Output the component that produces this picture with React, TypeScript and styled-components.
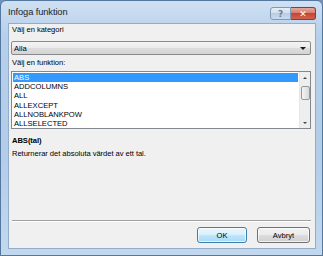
import React from 'react';
import styled, { createGlobalStyle } from 'styled-components';

const GlobalStyle = createGlobalStyle`
  html, body {
    margin: 0;
    padding: 0;
    background: #6f93bb;
  }
  * {
    box-sizing: border-box;
  }
`;

const Window = styled.div`
  width: 323px;
  height: 256px;
  display: flex;
  flex-direction: column;
  border: 1px solid #54779f;
  border-radius: 6px 6px 0 0;
  background: linear-gradient(180deg, #cfe0f3 0%, #b6cfea 14%, #b3cce8 60%, #c2d8ef 100%);
  padding: 0 6px 6px 7px;
  font-family: "Liberation Sans", Arial, sans-serif;
  color: #000;
`;

const TitleBar = styled.div`
  height: 22px;
  flex: none;
  display: flex;
  align-items: flex-start;
  justify-content: space-between;
`;

const Title = styled.div`
  font-size: 9.3px;
  line-height: 10px;
  margin-top: 6px;
  color: #1e1e1e;
  letter-spacing: -0.1px;
`;

const Caption = styled.div`
  display: flex;
  margin-top: 6px;
`;

const CaptionButton = styled.div<{ $close?: boolean }>`
  height: 13px;
  width: ${(p) => (p.$close ? '25px' : '21px')};
  display: flex;
  align-items: center;
  justify-content: center;
  border: 1px solid ${(p) => (p.$close ? '#8c3b32' : '#7e98b7')};
  border-radius: ${(p) => (p.$close ? '0 3px 3px 0' : '3px 0 0 3px')};
  border-left-width: ${(p) => (p.$close ? '0' : '1px')};
  background: ${(p) =>
    p.$close
      ? 'linear-gradient(180deg, #e8a89c 0%, #d47f70 45%, #c44735 50%, #d0634e 100%)'
      : 'linear-gradient(180deg, #e6eef8 0%, #d0deee 45%, #b9cde4 50%, #c8daee 100%)'};
  color: ${(p) => (p.$close ? '#fff' : '#6f7f94')};
  font-size: 9px;
  font-weight: bold;
  font-family: "DejaVu Sans", sans-serif;
`;

const Client = styled.div`
  flex: 1;
  display: flex;
  flex-direction: column;
  background: #f0f0f0;
  border: 1px solid #93acca;
  padding: 0 4px 5px 2px;
  font-size: 7.6px;
`;

const Label = styled.div<{ $top: number; $bold?: boolean }>`
  height: 10px;
  line-height: 10px;
  margin-top: ${(p) => p.$top}px;
  padding-left: 1px;
  font-weight: ${(p) => (p.$bold ? 'bold' : 'normal')};
  white-space: nowrap;
  letter-spacing: -0.05px;
`;

const Combo = styled.div`
  margin-top: 6px;
  height: 14px;
  display: flex;
  align-items: center;
  justify-content: space-between;
  padding: 0 4px 0 2px;
  border: 1px solid #8a8a8a;
  border-radius: 2px;
  background: linear-gradient(180deg, #f4f4f4 0%, #ebebeb 48%, #dddddd 52%, #d4d4d4 100%);
`;

const Arrow = styled.span`
  width: 0;
  height: 0;
  border-left: 3px solid transparent;
  border-right: 3px solid transparent;
  border-top: 3px solid #1a1a1a;
`;

const ListBox = styled.div`
  margin-top: 3px;
  height: 58px;
  display: flex;
  border: 1px solid #828790;
  background: #fff;
  overflow: hidden;
`;

const Items = styled.div`
  flex: 1;
  padding: 1px 1px 0 1px;
`;

const Item = styled.div<{ $selected?: boolean }>`
  height: 9.2px;
  line-height: 9.2px;
  padding-left: 1px;
  background: ${(p) => (p.$selected ? '#3399ff' : 'transparent')};
  color: ${(p) => (p.$selected ? '#fff' : '#000')};
`;

const ScrollBar = styled.div`
  width: 11px;
  display: flex;
  flex-direction: column;
  align-items: center;
  background: #eeeeee;
  border-left: 1px solid #e6e6e6;
`;

const ScrollArrow = styled.div<{ $up?: boolean }>`
  height: 11px;
  display: flex;
  align-items: center;
  justify-content: center;
  &::after {
    content: '';
    width: 0;
    height: 0;
    border-left: 2.5px solid transparent;
    border-right: 2.5px solid transparent;
    ${(p) => (p.$up ? 'border-bottom: 2.5px solid #444;' : 'border-top: 2.5px solid #444;')}
  }
`;

const Thumb = styled.div`
  width: 9px;
  height: 14px;
  margin-top: 3px;
  border: 1px solid #979797;
  border-radius: 2px;
  background: linear-gradient(90deg, #f4f4f4 0%, #e6e6e6 50%, #d9d9d9 100%);
`;

const Track = styled.div`
  flex: 1;
`;

const Spacer = styled.div`
  flex: 1;
`;

const Separator = styled.div`
  height: 2px;
  margin: 0 0 0 1px;
  border-top: 1px solid #a0a0a0;
  border-bottom: 1px solid #ffffff;
`;

const Footer = styled.div`
  margin-top: 5px;
  display: flex;
  justify-content: flex-end;
  gap: 10px;
  padding-right: 1px;
`;

const Button = styled.div<{ $default?: boolean; $w: number }>`
  width: ${(p) => p.$w}px;
  height: 16px;
  display: flex;
  align-items: center;
  justify-content: center;
  border: 1px solid ${(p) => (p.$default ? '#3c7fb1' : '#707070')};
  border-radius: 3px;
  background: ${(p) =>
    p.$default
      ? 'linear-gradient(180deg, #eaf6fd 0%, #d9f0fc 48%, #bee6fd 52%, #a7d9f5 100%)'
      : 'linear-gradient(180deg, #f2f2f2 0%, #ebebeb 48%, #dddddd 52%, #cfcfcf 100%)'};
  box-shadow: inset 0 0 0 1px rgba(255, 255, 255, 0.7);
`;

const functions = ['ABS', 'ADDCOLUMNS', 'ALL', 'ALLEXCEPT', 'ALLNOBLANKPOW', 'ALLSELECTED'];

export default function App() {
  return (
    <>
      <GlobalStyle />
      <Window>
        <TitleBar>
          <Title>Infoga funktion</Title>
          <Caption>
            <CaptionButton>?</CaptionButton>
            <CaptionButton $close>✕</CaptionButton>
          </Caption>
        </TitleBar>
        <Client>
          <Label $top={1}>Välj en kategori</Label>
          <Combo>
            <span>Alla</span>
            <Arrow />
          </Combo>
          <Label $top={3}>Välj en funktion:</Label>
          <ListBox>
            <Items>
              {functions.map((f, i) => (
                <Item key={f} $selected={i === 0}>
                  {f}
                </Item>
              ))}
            </Items>
            <ScrollBar>
              <ScrollArrow $up />
              <Thumb />
              <Track />
              <ScrollArrow />
            </ScrollBar>
          </ListBox>
          <Label $top={7} $bold>ABS(tal)</Label>
          <Label $top={3}>Returnerar det absoluta värdet av ett tal.</Label>
          <Spacer />
          <Separator />
          <Footer>
            <Button $default $w={50}>OK</Button>
            <Button $w={53}>Avbryt</Button>
          </Footer>
        </Client>
      </Window>
    </>
  );
}
